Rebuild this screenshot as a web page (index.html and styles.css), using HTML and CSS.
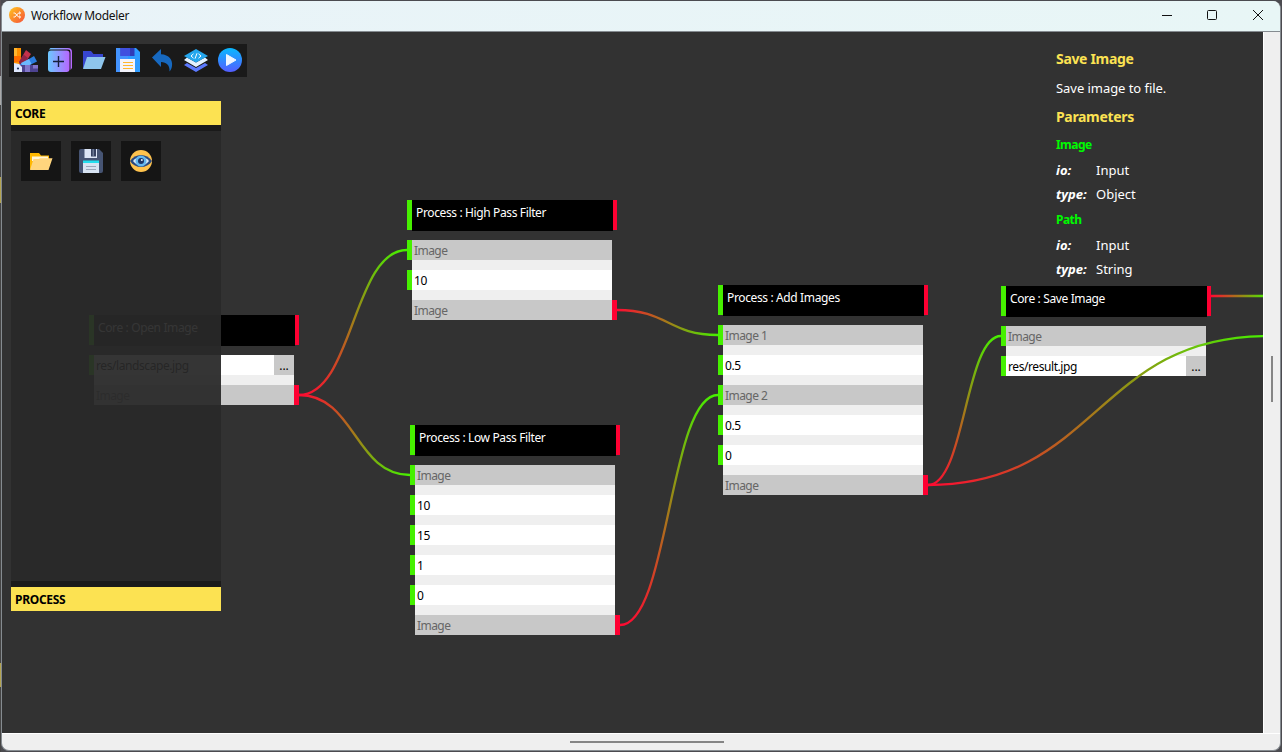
FILE: index.html
```html
<!DOCTYPE html>
<html lang="en">
<head>
<meta charset="utf-8">
<title>Workflow Modeler</title>
<link rel="stylesheet" href="styles.css">
</head>
<body>
<div class="window">
  <header class="titlebar">
    <svg class="app-icon" viewBox="0 0 16 16">
      <defs><linearGradient id="app" x1="0" y1="0" x2="1" y2="1"><stop offset="0" stop-color="#ffc81e"/><stop offset=".5" stop-color="#fb8a2c"/><stop offset="1" stop-color="#f4503c"/></linearGradient></defs>
      <circle cx="8" cy="8" r="8" fill="url(#app)"/>
      <path d="M4.500 6h1.400l3.600 4h1.200M4.500 10h1.400l3.600-4h1.200M10 4.700 11.700 6 10 7.300M10 8.700l1.700 1.300-1.700 1.300" fill="none" stroke="#fff" stroke-width="1"/>
    </svg>
    <span class="title">Workflow Modeler</span>
    <div class="controls">
      <svg viewBox="0 0 12 12"><path d="M2 6.500h10" /></svg>
      <svg viewBox="0 0 12 12"><rect x="1.500" y="1.500" width="9" height="9" rx="1"/></svg>
      <svg viewBox="0 0 12 12"><path d="M1 1l10 10M11 1 1 11"/></svg>
    </div>
  </header>
  <div class="body">
    <main class="viewport">
      <section class="node open-image">
        <div class="head"><i class="in"></i><b class="name">Core : Open Image</b><i class="out"></i></div>
        <div class="rows">
          <div class="row in-port value"><span>res/landscape.jpg</span><button>...</button></div>
          <div class="row out-port">Image</div>
        </div>
      </section>
      <section class="node high-pass">
        <div class="head"><i class="in"></i><b class="name">Process : High Pass Filter</b><i class="out"></i></div>
        <div class="rows">
          <div class="row in-port">Image</div>
          <div class="row in-port value">10</div>
          <div class="row out-port">Image</div>
        </div>
      </section>
      <section class="node low-pass">
        <div class="head"><i class="in"></i><b class="name">Process : Low Pass Filter</b><i class="out"></i></div>
        <div class="rows">
          <div class="row in-port">Image</div>
          <div class="row in-port value">10</div>
          <div class="row in-port value">15</div>
          <div class="row in-port value">1</div>
          <div class="row in-port value">0</div>
          <div class="row out-port">Image</div>
        </div>
      </section>
      <section class="node add-images">
        <div class="head"><i class="in"></i><b class="name">Process : Add Images</b><i class="out"></i></div>
        <div class="rows">
          <div class="row in-port">Image 1</div>
          <div class="row in-port value">0.5</div>
          <div class="row in-port">Image 2</div>
          <div class="row in-port value">0.5</div>
          <div class="row in-port value">0</div>
          <div class="row out-port">Image</div>
        </div>
      </section>
      <section class="node save-image">
        <div class="head"><i class="in"></i><b class="name">Core : Save Image</b><i class="out"></i></div>
        <div class="rows">
          <div class="row in-port">Image</div>
          <div class="row in-port value"><span>res/result.jpg</span><button>...</button></div>
        </div>
      </section>
      <svg class="wires" viewBox="2 32 1261 701">
        <defs>
          <linearGradient id="w1" gradientUnits="userSpaceOnUse" x1="299" y1="395" x2="407" y2="250"><stop offset="0" stop-color="#ff0a32"/><stop offset="1" stop-color="#46f000"/></linearGradient>
          <linearGradient id="w2" gradientUnits="userSpaceOnUse" x1="299" y1="395" x2="410" y2="475"><stop offset="0" stop-color="#ff0a32"/><stop offset="1" stop-color="#46f000"/></linearGradient>
          <linearGradient id="w3" gradientUnits="userSpaceOnUse" x1="617" y1="310" x2="718" y2="335"><stop offset="0" stop-color="#ff0a32"/><stop offset="1" stop-color="#46f000"/></linearGradient>
          <linearGradient id="w4" gradientUnits="userSpaceOnUse" x1="620" y1="625" x2="718" y2="395"><stop offset="0" stop-color="#ff0a32"/><stop offset="1" stop-color="#46f000"/></linearGradient>
          <linearGradient id="w5" gradientUnits="userSpaceOnUse" x1="928" y1="485" x2="1001" y2="336"><stop offset="0" stop-color="#ff0a32"/><stop offset="1" stop-color="#46f000"/></linearGradient>
          <linearGradient id="w6" gradientUnits="userSpaceOnUse" x1="928" y1="485" x2="1267" y2="336"><stop offset="0" stop-color="#ff0a32"/><stop offset="1" stop-color="#46f000"/></linearGradient>
          <linearGradient id="w7" gradientUnits="userSpaceOnUse" x1="1211" y1="296" x2="1267" y2="296"><stop offset="0" stop-color="#ff0a32"/><stop offset="1" stop-color="#46f000"/></linearGradient>
        </defs>
        <path stroke="url(#w1)" d="M299 395C353 395 353 250 407 250"/>
        <path stroke="url(#w2)" d="M299 395C355 395 355 475 410 475"/>
        <path stroke="url(#w3)" d="M617 310C668 310 668 335 718 335"/>
        <path stroke="url(#w4)" d="M620 625C669 625 669 395 718 395"/>
        <path stroke="url(#w5)" d="M928 485C965 485 965 336 1001 336"/>
        <path stroke="url(#w6)" d="M928 485C1097 485 1097 336 1267 336"/>
        <path stroke="url(#w7)" d="M1211 296H1267"/>
      </svg>
      <div class="overlay">
        <div class="left">
          <nav class="toolbar">
            <svg viewBox="0 0 24 24">
              <path fill="#ff9100" d="M0 0h7v24H0z"/><path fill="#ffb62e" d="M0 0h3v8H0z"/><path fill="#ff6d00" d="M0 8h7v6H0z"/>
              <path fill="#c4314b" d="M12 2l5 4L8 20 5 14z"/><path fill="#8e2447" d="M9.500 6.500l4.500 3.500L7 20l-2-6z"/>
              <path fill="#2b7de0" d="M20 8l3 5.500L6 22l-1-5z"/><path fill="#6cb8ff" d="M15 11l2.500 5L9 20l-2-5z"/>
              <path fill="#4d4391" d="M6 17h18v7H6z"/><path fill="#8275cb" d="M11 17h5v7h-5zM19 17h5v3.500h-5z"/>
              <path fill="#dfe8ff" d="M0 15l5 1 3 3v5H0z"/><circle cx="4" cy="20.500" r="1.100" fill="#26345a"/>
            </svg>
            <svg viewBox="0 0 24 24">
              <defs><linearGradient id="add" x1="0" y1="0" x2="1" y2="0"><stop offset="0" stop-color="#6cc8ff"/><stop offset="1" stop-color="#b766ff"/></linearGradient></defs>
              <path d="M2.500 0H20q4 0 4 4v16l-1.500 2V4q0-2.400-2.500-2.400H1z" fill="url(#add)"/>
              <rect x="0" y="2.500" width="21.500" height="21.500" rx="3" fill="url(#add)"/>
              <path d="M10.500 8v11M5 13.500h11" stroke="#17213a" stroke-width="1.400"/>
            </svg>
            <svg viewBox="0 0 24 24">
              <path d="M1 3h8l2.500 3H21v5L3 20H1z" fill="#3746cf"/><path d="M5 9h18.500L19 21H1z" fill="#8ec5ec"/>
            </svg>
            <svg viewBox="0 0 24 24">
              <path d="M0 0h20l4 4v20H0z" fill="#2e9bff"/><path d="M0 0h12v24H0z" fill="#4494ff"/>
              <path d="M4.500 0h14v8h-14z" fill="#303bb7"/><path d="M4.500 0H14v8H4.500z" fill="#4050df"/><path d="M4 11h15v13H4z" fill="#f3f3fb"/>
              <path d="M7 14.500h10M7 17.500h10M7 20.500h10" stroke="#ffb62e"/>
            </svg>
            <svg viewBox="0 0 24 24"><path d="M2 9.500 11 1v5.200C19 6.500 23 12 22 18c-.3 2.300-1 3.800-2.500 5.500.5-6-3-9.500-8.500-9.500v5z" fill="#1769c0"/></svg>
            <svg viewBox="0 0 24 24">
              <path d="M3 15 0 17l12 7 12-7-3-2-9 5z" fill="#5b79ff"/><path d="M3 9.500 0 12l12 7 12-7-3-2.500-9 5z" fill="#e3f1ff"/>
              <path d="M12 1l12 7-12 6.500L0 8z" fill="#25a7ee"/><path d="M9.500 5.800 7 8l2.500 2.200M14.500 5.800 17 8l-2.500 2.200M13 5.300 11 10.700" fill="none" stroke="#fff"/>
            </svg>
            <svg viewBox="0 0 24 24">
              <defs><linearGradient id="play" x1="0" y1="0" x2="0" y2="1"><stop offset="0" stop-color="#08b9ff"/><stop offset="1" stop-color="#545dff"/></linearGradient></defs>
              <circle cx="12" cy="12" r="12" fill="url(#play)"/><path d="M8.500 6.500v11L18 12z" fill="#eef5ff" stroke="#eef5ff" stroke-linejoin="round"/>
            </svg>
          </nav>
          <aside class="palette">
            <h2>CORE</h2>
            <div class="tools">
              <span class="tool"><svg viewBox="0 0 24 24">
                <path d="M1 4h9l2 2.500h8V10L3 20.500H1z" fill="#ffb800"/><path d="M3 7.500h16V12H3z" fill="#fff5d8"/><path d="M4.500 10H10l1-.8h12.500L19.500 21H1z" fill="#ffd57d"/>
              </svg></span>
              <span class="tool"><svg viewBox="0 0 24 24">
                <path d="M2 0h18l4 4v18q0 2-2 2H2q-2 0-2-2V2q0-2 2-2z" fill="#465473"/><path d="M5.500 0H18v9H5.500z" fill="#dce5f5"/><path d="M12 0h5v7.500h-5z" fill="#35405f"/><path d="M13.500 0H15v7h-1.500z" fill="#6b7893"/>
                <path d="M4 12h16v12H4z" fill="#d8e3f2"/><path d="M4 11.500h16V14H4z" fill="#24deee"/><path d="M7 17.500h10M7 20.500h10" stroke="#9ba7ba"/>
              </svg></span>
              <span class="tool"><svg viewBox="0 0 24 24">
                <circle cx="12" cy="12" r="11" fill="#ffc34d"/><path d="M1 12C6 4 18 4 23 12 18 20 6 20 1 12z" fill="#2b4a80"/><path d="M4 12q3-4 8-4.500 5 .5 8 4.500-3 4-8 4.500Q7 16 4 12z" fill="#d9ecfa"/>
                <circle cx="12" cy="12" r="5.500" fill="#64b8ef"/><circle cx="12" cy="12" r="3" fill="#1c3568"/><circle cx="12.800" cy="11" r="1" fill="#dff2ff"/>
              </svg></span>
            </div>
            <h2>PROCESS</h2>
          </aside>
        </div>
        <article class="help">
          <h3>Save Image</h3>
          <p>Save image to file.</p>
          <h3>Parameters</h3>
          <h4>Image</h4>
          <dl><dt>io:</dt><dd>Input</dd><dt>type:</dt><dd>Object</dd></dl>
          <h4>Path</h4>
          <dl><dt>io:</dt><dd>Input</dd><dt>type:</dt><dd>String</dd></dl>
        </article>
      </div>
    </main>
    <div class="vscroll"><i></i></div>
    <div class="hscroll"><i></i></div>
  </div>
</div>
</body>
</html>
```
FILE: styles.css
```css
* { box-sizing: border-box; }
body {
  margin: 0;
  width: 1282px;
  height: 752px;
  padding: 1px 1px 1px;
  overflow: hidden;
  background: linear-gradient(#575055 0 76px, #aaa 76px 105px, #444 105px 177px, #b4a450 177px 203px, #444 203px 663px, #b4a450 663px 687px, #444 687px) 0 0 / 1px 100% no-repeat #4b4b50;
  font-family: "Noto Sans", "Open Sans", sans-serif;
}
.window {
  width: 1280px;
  height: 750px;
  border-radius: 8px;
  overflow: hidden;
  background: #efefef;
  border: 1px solid #858b90;
  border-top: 0;
  display: flex;
  flex-direction: column;
}
.titlebar {
  height: 31px;
  flex: none;
  background: linear-gradient(90deg, #e9f3f8, #e8f6f6);
  border-bottom: 1px solid #858b90;
  display: flex;
  align-items: center;
  padding: 0 16px 2px 7px;
}
.app-icon { width: 16px; height: 16px; margin-right: 6px; }
.title { font-size: 12px; color: #111; letter-spacing: -0.34px; padding-top: 1px; }
.controls { margin-left: auto; display: flex; gap: 34px; }
.controls svg { width: 12px; height: 12px; fill: none; stroke: #111; stroke-width: 1; }
.body {
  flex: 1;
  display: grid;
  grid-template-columns: 1261px 1fr;
  grid-template-rows: 701px 1fr;
}
.viewport { position: relative; overflow: hidden; background: #323232; }
.vscroll { border-left: 1px solid #fff; padding: 324px 0 0 7px; }
.vscroll i { display: block; width: 2px; height: 46px; background: #858585; }
.hscroll { grid-column: 1 / 3; border-top: 1px solid #fff; padding: 7px 0 0 568px; }
.hscroll i { display: block; width: 154px; height: 2px; background: #858585; }

.node { position: absolute; width: 210px; font-size: 12px; }
.open-image { left: 87px; top: 283px; }
.high-pass { left: 405px; top: 168px; }
.low-pass { left: 408px; top: 393px; }
.add-images { left: 716px; top: 253px; }
.save-image { left: 999px; top: 254px; }
.head { display: flex; height: 31px; margin-bottom: 9px; }
.head i { height: 30px; }
.in { width: 5px; background: #46f000; }
.out { width: 4px; background: #ff0032; }
.name {
  flex: 1;
  background: #000;
  color: #fff;
  font-weight: 400;
  line-height: 26px;
  padding-left: 4px;
  letter-spacing: -0.37px;
  white-space: nowrap;
}
.rows { display: flex; flex-direction: column; gap: 10px; margin: 0 5px; background: #efefef; }
.row {
  height: 20px;
  line-height: 22px;
  padding-left: 2px;
  background: #c8c8c8;
  color: #666;
  display: flex;
  justify-content: space-between;
  letter-spacing: -0.55px;
}
.value { background: #fff; color: #000; letter-spacing: -0.42px; }
.in-port { margin-left: -5px; border-left: 5px solid #46f000; }
.out-port { margin-right: -5px; border-right: 5px solid #ff0032; }
.row button { width: 20px; height: 20px; border: 0; padding: 1px 0 0; background: #c8c8c8; font: 12px/20px "Noto Sans", sans-serif; color: #000; }
.wires { position: absolute; inset: 0; width: 1261px; height: 701px; fill: none; stroke-width: 2.3; }

.overlay { position: relative; display: flex; justify-content: space-between; }
.left { padding: 12px 0 0 7px; }
.toolbar { display: flex; gap: 10px; width: 238px; height: 33px; padding: 4px 5px; background: #1a1a1a; }
.toolbar svg { width: 24px; height: 24px; flex: none; }
.palette { width: 210px; margin: 24px 0 0 2px; }
.palette h2 { margin: 0; height: 24px; padding-left: 4px; background: #fce252; color: #000; font-size: 12px; line-height: 25px; letter-spacing: -0.3px; }
.tools {
  height: 462px;
  display: flex;
  gap: 10px;
  padding: 10px;
  border: solid #1a1a1a;
  border-width: 6px 0;
  background: rgba(40, 40, 40, .94) padding-box;
}
.tool { width: 40px; height: 40px; padding: 8px; background: #151515; }
.tool svg { display: block; width: 24px; height: 24px; }
.help { width: 207px; padding-top: 17px; color: #fff; font-size: 13px; line-height: 20px; }
.help h3 { margin: 0; font-size: 14px; line-height: 20px; color: #fce252; letter-spacing: -0.33px; }
.help p { margin: 9px 0; letter-spacing: -0.05px; }
.help h4 { margin: 8px 0 0; font-size: 12px; line-height: 19px; color: #00fa00; letter-spacing: -0.55px; }
.help dl + h4 { margin-top: 6px; }
.help dl { display: grid; grid-template-columns: 40px 1fr; row-gap: 4px; margin: 6px 0 0; }
.help dt { font-weight: 700; font-style: italic; }
.help dd { margin: 0; }
```
